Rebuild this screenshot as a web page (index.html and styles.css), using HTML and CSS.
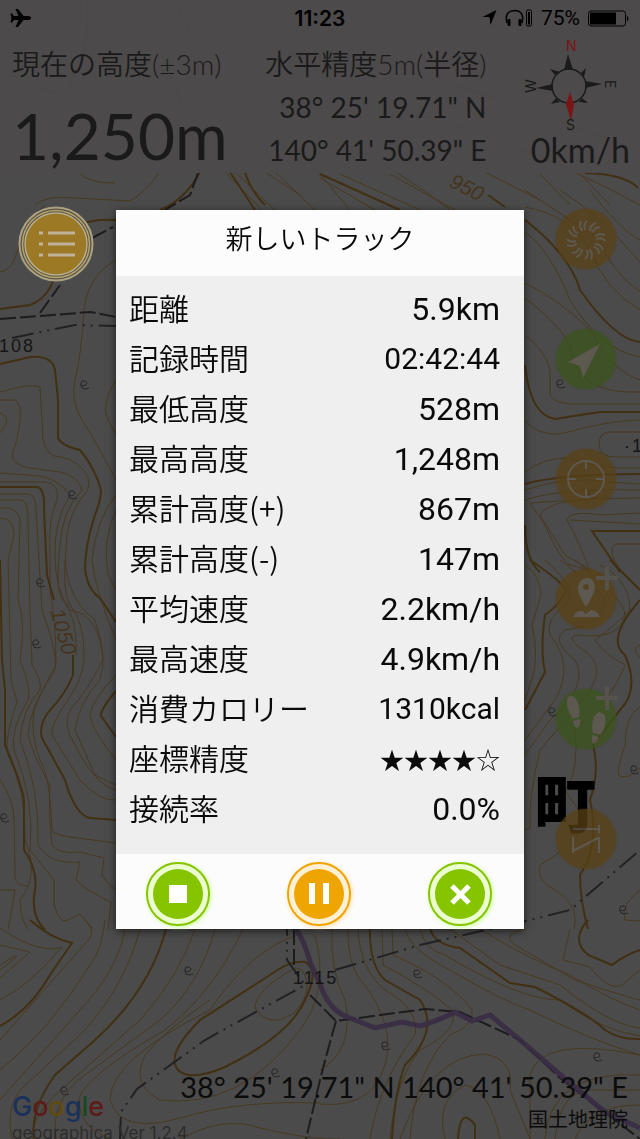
FILE: index.html
```html
<!DOCTYPE html>
<html lang="ja">
<head>
  <meta charset="UTF-8">
  <meta name="viewport" content="width=device-width, initial-scale=1.0">
  <title>新しいトラック</title>
  <link rel="stylesheet" href="styles.css">
</head>
<body>
<div class="screen">
  <svg class="map" viewBox="0 0 640 1139" preserveAspectRatio="xMidYMid slice" aria-hidden="true">
    <defs>
      <path id="orchard" d="M-3 0 Q2 2 3 -2 Q2 -5 -2 -4 Q-5 -1 -2 3 Q1 5 5 3"/>
    </defs>

    <!-- contour lines -->
    <g class="contour">
      <path d="M88 0 Q90 50 72 80 Q68 98 50 92 L0 70"/>
      <path d="M130 0 Q160 40 178 95 Q188 130 202 160"/>
      <path d="M175 0 Q210 90 300 150 L350 210"/>
      <path d="M195 0 Q240 80 320 130 Q400 170 450 210"/>
      <path d="M240 0 Q290 70 400 110 Q520 140 640 205"/>
      <path d="M300 0 Q350 60 470 90 L640 150"/>
      <path d="M78 172 Q90 184 115 183"/>
      <path d="M35 205 Q45 195 75 198 L130 201 Q148 190 158 174"/>
      <path d="M225 172 L262 210 M235 172 L275 210 M265 172 L300 195 M275 172 L315 210 M320 178 L375 210 M340 174 L420 210 M390 174 L455 210 M485 172 L540 200 M540 174 L570 205 M580 174 L610 205"/>
      <path d="M0 272 Q12 270 16 255 Q22 235 35 215 L45 205"/>
      <path d="M116 260 Q88 275 84 310 Q82 350 75 380 Q70 400 82 420 Q95 440 116 480"/>
      <path d="M116 380 Q100 405 108 420 L116 434"/>
      <path d="M0 392 Q30 383 40 387 L43 440 Q47 457 60 457 Q80 460 88 478 Q92 488 80 500 Q66 520 66 550 Q62 590 70 605 Q85 622 84 660 Q82 680 68 700 Q50 725 52 735 L80 780 Q100 802 116 800"/>
      <path d="M0 400 L15 400 Q22 405 20 420 Q18 440 12 455 Q12 465 30 468 L60 472 Q78 476 82 490 Q62 510 60 545 Q55 590 63 600 Q78 618 76 655"/>
      <path d="M0 412 Q9 418 6 424 L0 433"/>
      <path d="M0 473 L40 476 Q60 480 70 495 Q54 520 55 555 Q55 590 70 610 Q100 615 103 660 Q88 690 70 710 Q62 725 75 745 Q95 785 116 790"/>
      <path d="M0 482 L45 482 Q60 484 57 500 Q48 520 50 550 V590 Q56 620 56 665 Q42 690 34 710 Q30 735 40 760 Q50 775 52 830 Q55 835 70 837 L116 843"/>
      <path d="M0 494 H28 Q36 494 36 510 L39 560 L42 610 Q60 660 54 672 Q30 705 28 735 Q34 758 50 785 Q48 810 52 845 Q60 855 80 852 L104 858 L102 875 Q110 888 116 889"/>
      <path d="M0 500 H22 Q28 502 28 520 L30 610 L32 665 Q42 680 40 690 Q22 710 20 740 Q40 790 38 845 Q50 865 80 862 L76 880 Q88 892 111 902 L108 930"/>
      <path d="M0 508 Q18 506 20 520 L18 600 Q26 620 20 660 Q32 690 28 700 Q10 730 14 750 Q35 800 30 850 Q46 870 54 880 L54 905 Q60 925 68 920 L80 914 L93 929"/>
      <path d="M0 518 Q14 518 14 535 L8 560 L11 680 L17 702 Q4 740 8 755 Q26 790 25 840 Q40 875 20 900 Q20 918 28 929"/>
      <path d="M0 780 Q14 800 14 820 L15 870 Q12 885 27 886 M0 890 L15 890 L8 930"/>
      <path d="M116 495 Q96 520 92 560 Q95 590 116 640"/>
      <path d="M116 510 Q102 540 108 575 L116 590"/>
      <path d="M65 560 Q68 600 95 620 Q108 655 100 680 Q80 700 75 730 L95 775 L116 785"/>
      <path d="M116 675 Q92 700 90 715 Q92 730 116 760"/>
      <path d="M0 965 Q24 950 13 960 L0 970 M0 945 L30 952 L0 978 M0 928 Q40 955 62 947 Q30 985 0 1000"/>
      <path d="M85 920 Q95 930 90 938 L0 1040 M105 920 Q102 950 90 965 Q50 1030 0 1070"/>
      <path d="M125 929 Q118 970 80 1010 L0 1100"/>
      <path d="M140 929 Q125 985 85 1030 L20 1090 Q5 1110 12 1139"/>
      <path d="M195 929 Q180 975 140 1020 L55 1095 Q30 1120 32 1139"/>
      <path d="M215 929 Q200 985 160 1020 L85 1075 Q50 1100 56 1139"/>
      <path d="M243 929 Q215 990 165 1030 Q95 1070 80 1095 Q75 1125 110 1139"/>
      <path d="M300 934 Q250 950 210 1010 Q110 1060 110 1100 Q120 1135 180 1118 Q240 1100 320 1103"/>
      <path d="M315 935 Q330 990 300 1030 Q240 1110 160 1100 Q130 1085 145 1055 Q165 1030 210 1000"/>
      <path d="M295 968 Q255 990 255 1008 Q270 1030 295 1012 Q315 990 302 970 Z"/>
      <path d="M180 1139 Q225 1115 260 1128 Q310 1140 340 1139"/>
      <path d="M332 929 Q330 970 345 1000 Q355 1050 320 1070"/>
      <path d="M348 929 Q348 970 365 985 Q390 1020 388 1050 Q380 1110 320 1104"/>
      <path d="M358 929 Q360 970 385 990 Q420 1010 415 1035 Q380 1080 370 1139"/>
      <path d="M382 929 L383 965 Q430 990 452 1010 Q460 1030 420 1050 Q395 1080 390 1139"/>
      <path d="M392 929 L393 955 Q450 980 472 1010 Q475 1025 450 1035 Q415 1070 410 1139"/>
      <path d="M405 929 Q410 950 450 970 Q500 1000 530 1010 Q590 1040 640 1055"/>
      <path d="M420 929 Q425 950 445 955 Q520 1000 560 1000 Q600 1030 640 1036"/>
      <path d="M450 929 L500 965 L560 985 Q610 1025 640 1028"/>
      <path d="M480 929 Q530 960 570 975 Q610 1000 640 1010"/>
      <path d="M525 929 Q500 935 515 945 L575 980 Q620 995 640 1000"/>
      <path d="M570 929 L563 960 L590 967 Q610 992 622 985 L640 970"/>
      <path d="M400 1139 Q430 1055 485 1054 Q515 1060 510 1090 L530 1139"/>
      <path d="M445 1139 Q435 1100 465 1085 Q490 1090 500 1139"/>
      <path d="M530 1139 L530 1075 Q540 1035 640 1055"/>
      <path d="M555 1139 Q560 1085 600 1090 L640 1090 M575 1139 Q590 1105 640 1105 M545 1139 Q550 1070 640 1075"/>
      <path d="M525 207 Q570 215 590 250 Q605 290 640 310"/>
      <path d="M560 190 Q600 215 640 262 M590 190 Q620 230 640 240 M525 190 L600 240 Q610 270 640 292"/>
      <path d="M525 232 Q550 250 570 300 Q600 350 640 357"/>
      <path d="M525 283 Q560 300 590 330 Q610 370 640 380"/>
      <path d="M525 298 Q560 325 570 345 Q575 395 640 392"/>
      <path d="M525 335 Q545 350 550 370 V395 Q555 405 580 404 L640 404"/>
      <path d="M525 420 Q535 435 560 434 Q610 420 640 420"/>
      <path d="M640 432 H610 Q598 433 599 445 Q600 457 615 457 H640"/>
      <path d="M525 472 Q545 457 570 458 Q600 470 640 468"/>
      <path d="M525 490 Q570 475 610 482 L640 484 M525 500 Q560 488 640 490"/>
      <path d="M640 498 L590 499 L530 503 L545 525 Q560 560 570 565 L590 570"/>
      <path d="M600 515 L640 513 M600 515 Q570 510 567 520 L575 535 L590 570"/>
      <path d="M590 500 Q550 500 540 515 L565 555 L600 575"/>
      <path d="M640 544 H615 Q607 550 620 570 M640 524 L570 520"/>
      <path d="M525 565 Q540 575 541 595 L532 625 Q540 660 530 685 L525 700"/>
      <path d="M545 560 Q580 590 565 605 Q545 620 550 635 Q575 665 555 700 L525 740"/>
      <path d="M560 560 Q600 590 605 600 Q605 625 565 630 Q550 640 575 660 Q590 685 550 720 L525 755"/>
      <path d="M575 560 Q625 600 625 615 Q620 640 580 635 Q560 635 590 655 Q610 675 570 715 L540 750 Q528 800 530 828 L525 830"/>
      <path d="M600 565 Q630 580 630 610 Q610 630 595 640 Q605 655 625 665 Q620 680 605 700 L575 730 L576 750 Q575 780 565 790 L585 820 Q570 850 540 865 Q535 880 555 890 Q580 905 574 929"/>
      <path d="M640 645 Q630 650 640 657 M640 707 Q625 715 625 745 Q615 775 620 776 Q628 780 640 768"/>
      <path d="M640 890 Q620 905 625 920 L640 921"/>
    </g>
    <g class="contour contour-index">
      <path d="M200 172 Q185 200 160 210 M230 172 L255 210 M265 205 Q250 190 245 172"/>
      <path d="M320 174 L400 210 M488 195 L505 207 M585 173 Q625 174 638 188"/>
      <path d="M0 309 L30 305 Q48 298 54 278 Q60 235 72 228 Q90 218 116 220"/>
      <path d="M0 364 L30 357 Q52 355 55 370 L58 400 V438 Q62 446 80 450 Q95 468 101 490 Q101 500 95 515 Q85 545 85 570 Q88 590 100 598 L116 622"/>
      <path d="M0 487 H38 Q45 490 44 510 L47 575 L54 600 M73 655 L73 675 Q65 695 50 710 Q38 725 42 738 L65 780 Q75 815 90 818 L116 820"/>
      <path d="M0 560 L2 660 L5 690 V745 Q22 785 24 800 V850 Q38 870 35 890 Q30 915 45 930"/>
      <path d="M116 691 Q100 710 101 716 L116 737"/>
      <path d="M30 920 Q50 938 72 943 L50 975 Q30 1010 0 1026"/>
      <path d="M166 929 Q150 990 95 1040 L55 1075 Q30 1110 34 1139"/>
      <path d="M305 962 Q290 960 270 975 L200 1020 Q165 1055 178 1070 Q190 1082 225 1067 Q290 1035 305 1000 Q320 970 305 962 Z"/>
      <path d="M370 920 Q368 965 385 980 L420 1000 Q440 1030 405 1065 Q395 1090 392 1139"/>
      <path d="M430 929 Q435 945 460 948 L510 983 L535 987 Q590 1015 605 1030 Q620 1040 640 1039"/>
      <path d="M588 920 Q570 940 588 955 L612 965 Q625 955 640 950"/>
      <path d="M458 1139 Q460 1105 475 1125 V1139"/>
      <path d="M525 220 Q570 255 580 290 Q615 340 640 342"/>
      <path d="M525 365 Q530 415 555 419 Q580 415 600 412 H640"/>
      <path d="M525 484 Q560 474 640 474 M640 531 H592 L620 572 M525 525 Q525 560 540 572"/>
      <path d="M530 560 Q560 580 566 590 Q560 605 545 615 Q540 650 545 672 L525 710"/>
      <path d="M610 560 L640 590 M640 600 Q605 640 625 655 Q640 690 620 710 L593 745 Q600 770 590 800 Q600 845 580 875 Q580 900 588 929"/>
    </g>

    <!-- roads and borders -->
    <g class="road">
      <path d="M0 319 L40 316 L90 312 L116 317 M40 313 L60 285 M92 238 L113 227"/>
      <path d="M294 929 V968 M310 995 L336 1021 L425 1009 L460 1012 L520 1040 L560 1078 L640 1139"/>
      <path d="M336 1021 Q325 1060 320 1080 L306 1139"/>
      <path d="M198 173 L190 195 L165 210"/>
    </g>
    <g class="border">
      <path d="M12 338 L50 330 L75 325 L116 326"/>
      <path d="M120 1139 L121 1112 L137 1089 L205 1040 L305 985 L287 960 V929 M335 970 L420 945 L530 920 L570 910 L640 850"/>
    </g>
    <path class="track" d="M296 929 Q304 940 310 962 L320 984 Q328 1008 345 1016 L375 1028 L402 1022 L420 1026 Q440 1020 455 1012 L472 1021 L490 1015 L520 1040 L570 1083 L605 1112 L640 1128"/>

    <g class="orchards">
      <use href="#orchard" x="84" y="385"/><use href="#orchard" x="72" y="495"/>
      <use href="#orchard" x="40" y="583"/><use href="#orchard" x="36" y="644"/>
      <use href="#orchard" x="4" y="818"/><use href="#orchard" x="188" y="971"/>
      <use href="#orchard" x="64" y="1091"/><use href="#orchard" x="275" y="1073"/>
      <use href="#orchard" x="417" y="974"/><use href="#orchard" x="385" y="1046"/>
      <use href="#orchard" x="597" y="1057"/><use href="#orchard" x="560" y="384"/>
      <use href="#orchard" x="552" y="712"/><use href="#orchard" x="634" y="770"/>
      <use href="#orchard" x="623" y="910"/><use href="#orchard" x="592" y="494"/>
    </g>
    <text class="map-spot" x="-1" y="352">108</text>
    <text class="map-spot" x="293" y="984">1115</text>
    <text class="map-spot" x="624" y="452">·1</text>
    <text class="map-height" transform="translate(50 611) rotate(74)">1050</text>
    <text class="map-height" transform="translate(448 186) rotate(27)">950</text>
    <text class="map-town" x="534" y="828">町</text>
  </svg>

  <header class="header">
    <div class="status">
      <svg class="status-plane" viewBox="0 0 22 20" role="img" aria-label="機内モード"><path d="M21 9.200Q20 8 18 8H13.500L8 1H5.500L8.500 8H4L2 5.500H.5L1.500 10L.5 14.500H2L4 12H8.500L5.500 19H8L13.500 12H18Q20 12 21 10.800Z"/></svg>
      <time>11:23</time>
      <div class="status-right">
        <svg width="15" height="16" viewBox="0 0 14 16" aria-hidden="true"><path d="M14 0L0 7H7L8 15Z"/></svg>
        <svg width="28" height="18" viewBox="0 0 28 18" aria-hidden="true"><path d="M2 14Q-1 2 9.500 1.500Q20 2 17 14" fill="none" stroke="#000" stroke-width="1.500"/><rect x="2.500" y="10" width="3" height="7" rx="1"/><rect x="13.500" y="10" width="3" height="7" rx="1"/><rect x="21.500" y="1" width="5" height="16" rx="1.500" fill="none" stroke="#000"/><path d="M23 3H25V15.500H23Z"/></svg>
        <span>75%</span>
        <svg width="42" height="17" viewBox="0 0 42 16" aria-hidden="true"><rect x=".5" y=".5" width="37" height="15" rx="2.500" fill="none" stroke="#000"/><path d="M2 2H28V14H2Z"/><path d="M39 5Q42 8 39 11Z"/></svg>
      </div>
    </div>
    <div class="readings">
      <div class="altitude">
        <div class="reading-label">現在の高度(±3m)</div>
        <div class="altitude-value">1,250m</div>
      </div>
      <div class="position">
        <div class="reading-label">水平精度5m(半径)</div>
        <div class="coordinate">38° 25' 19.71" N</div>
        <div class="coordinate">140° 41' 50.39" E</div>
      </div>
      <div class="heading">
        <svg class="compass" viewBox="0 0 90 90" role="img" aria-label="コンパス">
          <circle cx="45" cy="44" r="17" fill="none" stroke="#1b1b1b" stroke-width="1.500"/>
          <path d="M44 12L49 28L40 28ZM78 42L61 46V39ZM12 46L29 42V49ZM31 33L26 27L36 30ZM57 31L62 26L60 35ZM32 56L27 62L36 60ZM58 56L64 61L55 60Z" fill="#1b1b1b"/>
          <path d="M46 50L50 63L47 79L42 62Z" fill="#7b1515"/>
          <text class="north" x="42" y="9">N</text>
          <text x="42" y="88">S</text>
          <text transform="translate(81 38) rotate(90)">E</text>
          <text transform="translate(12 51) rotate(-90)">W</text>
        </svg>
        <div class="speed">0km/h</div>
      </div>
    </div>
  </header>

  <main class="controls">
    <button class="menu-button" type="button" aria-label="メニュー">
      <svg viewBox="0 0 76 76" aria-hidden="true">
        <circle cx="38" cy="38" r="36.500" fill="#5b5343" stroke="#aaa083" stroke-width="2"/>
        <circle cx="38" cy="38" r="33.500" fill="none" stroke="#b5a66e" stroke-width="1.500"/>
        <circle cx="38" cy="38" r="31" fill="#9c7925" stroke="#b9ad8f" stroke-width="1.500"/>
        <path d="M30 27H57M30 38H57M30 49H57M21 27H25M21 38H25M21 49H25" stroke="#c0b19b" stroke-width="3"/>
      </svg>
    </button>
    <div class="tools">
      <button class="tool" type="button" aria-label="回転">
        <svg viewBox="0 0 60 60" aria-hidden="true">
          <defs><path id="blade" d="M29 21Q27 15 31 12M34 22Q34 16 40 14"/></defs>
          <use href="#blade"/><use href="#blade" transform="rotate(45 30 31)"/><use href="#blade" transform="rotate(90 30 31)"/><use href="#blade" transform="rotate(135 30 31)"/><use href="#blade" transform="rotate(180 30 31)"/><use href="#blade" transform="rotate(225 30 31)"/><use href="#blade" transform="rotate(270 30 31)"/><use href="#blade" transform="rotate(315 30 31)"/>
        </svg>
      </button>
      <button class="tool tool-green" type="button" aria-label="現在地">
        <svg viewBox="0 0 60 60" aria-hidden="true"><path class="solid" d="M44 15L12 33L24 37L27 49Z"/></svg>
      </button>
      <button class="tool" type="button" aria-label="中心">
        <svg viewBox="0 0 60 60" aria-hidden="true"><circle cx="30" cy="30" r="18"/><path d="M30 12V20M30 40V48M12 30H20M40 30H48"/></svg>
      </button>
      <button class="tool" type="button" aria-label="地点を追加">
        <svg viewBox="0 0 60 60" aria-hidden="true"><path class="solid" fill-rule="evenodd" d="M30 38Q21 24 22 18Q24 9 31 9Q38 9 39 18Q39 24 30 38ZM30 15A3 3 0 1 0 30 21A3 3 0 1 0 30 15ZM17 48Q20 41 26 42L30 45L35 41Q42 42 44 48Z"/><path class="plus" d="M51-2V21M40 9H62"/></svg>
      </button>
      <button class="tool tool-green" type="button" aria-label="トラックを追加">
        <svg viewBox="0 0 60 60" aria-hidden="true"><path class="solid" d="M11 11Q14 3 20 10Q25 18 23 28L17 30Q10 20 11 11ZM17 32L24 30Q25 38 21 39Q18 38 17 32ZM38 28Q44 19 49 27Q51 36 45 46L37 44Q35 35 38 28ZM36 46L43 48Q41 54 38 55Q35 53 36 46Z"/><path class="plus" d="M51-2V21M40 9H62"/></svg>
      </button>
      <button class="tool" type="button" aria-label="地図を切替">
        <svg viewBox="0 0 60 60" aria-hidden="true"><path d="M17 28V44M17 42L42 29M43 28V44M17 20H43M43 16V24"/></svg>
      </button>
    </div>
  </main>

  <footer class="footer">
    <div class="brand">
      <div class="google"><span class="blue">G</span><span class="red">o</span><span class="yellow">o</span><span class="blue">g</span><span class="green">l</span><span class="red">e</span></div>
      <div class="version">geographica Ver 1.2.4</div>
    </div>
    <div class="map-info">
      <div class="map-coordinate">38° 25' 19.71" N 140° 41' 50.39" E</div>
      <div class="source">国土地理院</div>
    </div>
  </footer>
</div>

<div class="overlay">
  <section class="dialog" role="dialog" aria-labelledby="dialog-title">
    <h1 class="dialog-title" id="dialog-title">新しいトラック</h1>
    <dl class="stats">
      <div class="stat"><dt>距離</dt><dd>5.9km</dd></div>
      <div class="stat"><dt>記録時間</dt><dd class="compact">02:42:44</dd></div>
      <div class="stat"><dt>最低高度</dt><dd>528m</dd></div>
      <div class="stat"><dt>最高高度</dt><dd>1,248m</dd></div>
      <div class="stat"><dt>累計高度(+)</dt><dd>867m</dd></div>
      <div class="stat"><dt>累計高度(-)</dt><dd>147m</dd></div>
      <div class="stat"><dt>平均速度</dt><dd>2.2km/h</dd></div>
      <div class="stat"><dt>最高速度</dt><dd>4.9km/h</dd></div>
      <div class="stat"><dt>消費カロリー</dt><dd class="compact">1310kcal</dd></div>
      <div class="stat"><dt>座標精度</dt><dd class="stars">★★★★☆</dd></div>
      <div class="stat"><dt>接続率</dt><dd>0.0%</dd></div>
    </dl>
    <div class="dialog-actions">
      <button class="action" type="button" aria-label="停止">
        <svg viewBox="0 0 50 50" aria-hidden="true"><path d="M16 16H34V34H16Z"/></svg>
      </button>
      <button class="action action-pause" type="button" aria-label="一時停止">
        <svg viewBox="0 0 50 50" aria-hidden="true"><path d="M15 14H21V35H15ZM29 14H35V35H29Z"/></svg>
      </button>
      <button class="action" type="button" aria-label="閉じる">
        <svg viewBox="0 0 50 50" aria-hidden="true"><path d="M17 17L34 34M34 17L17 34" stroke="#fff" stroke-width="5"/></svg>
      </button>
    </div>
  </section>
</div>
</body>
</html>
```
FILE: styles.css
```css
:root {
  --backdrop: #4b4b4b;
  --ink: #1b1a1a;
  --green: #86c400;
  --orange: #eea500;
  --light: #fcfcfc;
  --panel: #efefef;
  --cjk: "Noto Sans CJK JP", sans-serif;
}

* {
  margin: 0;
  padding: 0;
  box-sizing: border-box;
}

body {
  font-family: Lato, var(--cjk);
  background: var(--backdrop);
  color: var(--ink);
}

button {
  border: none;
  background: none;
  cursor: pointer;
}

svg {
  display: block;
}

.screen {
  position: relative;
  display: flex;
  flex-direction: column;
  height: 100vh;
  overflow: hidden;
}

/* Map */
.map {
  position: absolute;
  inset: 0;
  width: 100%;
  height: 100%;
}

.map path {
  fill: none;
}

.contour {
  stroke: #48391f;
  stroke-width: 1;
}

.contour-index {
  stroke: #423013;
  stroke-width: 2;
}

.road {
  stroke: #1d1d20;
  stroke-width: 2;
  stroke-dasharray: 16 4;
}

.border {
  stroke: #222225;
  stroke-width: 2;
  stroke-dasharray: 22 6 2 6 2 6;
}

.map .track {
  stroke: #382c44;
  stroke-width: 5;
  opacity: 0.9;
}

.orchards {
  stroke: #27272a;
}

.map-spot {
  font: 18px "Liberation Sans", sans-serif;
  letter-spacing: 2px;
  fill: #151515;
}

.map-height {
  font: italic 21px "Liberation Sans", sans-serif;
  fill: #44351c;
}

.map-town {
  font: 900 62px "Noto Sans CJK JP", sans-serif;
  fill: #000000;
}

/* Header */
.header {
  position: relative;
  height: 173px;
  background: rgba(76, 74, 75, 0.85);
}

.status {
  display: grid;
  grid-template-columns: 1fr auto 1fr;
  align-items: center;
  height: 36px;
  padding: 0 10px;
  font-family: Inter, sans-serif;
  font-size: 20px;
  color: #000000;
}

.status time {
  font-size: 21px;
  font-weight: 600;
}

.status-plane {
  width: 22px;
  height: 20px;
}

.status-right {
  display: flex;
  align-items: center;
  justify-content: flex-end;
  gap: 8px;
}

.status-right span {
  font-family: Roboto, sans-serif;
  font-size: 21px;
}

.readings {
  display: flex;
  justify-content: space-between;
  padding: 6px 10px 0 12px;
}

.reading-label {
  font-size: 28px;
  font-weight: 350;
  line-height: 44px;
  white-space: nowrap;
}

.altitude-value {
  font-size: 64px;
  line-height: 100px;
}

.position {
  text-align: right;
}

.coordinate {
  font-size: 28px;
  line-height: 43px;
  white-space: nowrap;
}

.heading {
  display: flex;
  flex-direction: column;
  align-items: flex-end;
}

.compass {
  width: 90px;
  height: 90px;
  margin-right: 16px;
  overflow: visible;
}

.compass text {
  font: 14px/14px Inter, sans-serif;
  fill: #1b1a1a;
}

.compass .north {
  fill: #7b1515;
}

.speed {
  font-size: 34px;
  line-height: 36px;
}

/* Map controls */
.controls {
  position: relative;
  flex: 1;
  display: flex;
  justify-content: space-between;
  align-items: flex-start;
  padding: 33px 24px 0 18px;
}

.menu-button {
  width: 76px;
  height: 76px;
}

.tools {
  display: flex;
  flex-direction: column;
  gap: 60px;
  padding-top: 3px;
}

.tool {
  width: 60px;
  height: 60px;
  border-radius: 50%;
  background: #594115;
  box-shadow: 0 0 2px #594115;
  opacity: 0.75;
}

.tool-green {
  background: #3c531c;
  box-shadow: 0 0 2px #3c531c;
}

.tool svg {
  overflow: visible;
  fill: none;
  stroke: #655e52;
  stroke-width: 2;
}

.tool .solid {
  fill: #655e52;
  stroke: none;
}

.tool .plus {
  stroke: #5a564e;
  stroke-width: 4;
}

/* Footer */
.footer {
  position: relative;
  display: flex;
  justify-content: space-between;
  align-items: flex-end;
  padding: 0 12px 6px;
  color: #0c0c0c;
}

.brand {
  flex: 1;
  width: 0;
  margin-bottom: -9px;
}

.google {
  font: 500 27px/34px Inter, sans-serif;
}

.blue {
  color: #19315b;
}

.red {
  color: #5d1b18;
}

.yellow {
  color: #624b0a;
}

.green {
  color: #164922;
}

.version {
  font: 17px/18px Inter, sans-serif;
  color: #2d2d2d;
  white-space: nowrap;
}

.map-info {
  text-align: right;
}

.map-coordinate {
  font-size: 29px;
  line-height: 36px;
  white-space: nowrap;
}

.source {
  font-size: 20px;
  line-height: 28px;
}

/* Dialog */
.overlay {
  position: fixed;
  inset: 0;
  display: grid;
  place-items: center;
  pointer-events: none;
}

.dialog {
  width: 90%;
  max-width: 408px;
  background: var(--light);
  color: #0a0a0a;
  box-shadow: 0 2px 8px rgba(0, 0, 0, 0.6);
  pointer-events: auto;
}

.dialog-title {
  padding: 8px 0 18px;
  font-family: var(--cjk);
  font-size: 27px;
  font-weight: 350;
  line-height: 40px;
  text-align: center;
}

.stats {
  padding: 8px 24px 20px 13px;
  background: var(--panel);
}

.stat {
  display: flex;
  justify-content: space-between;
  align-items: flex-start;
  height: 50px;
}

.stat dt {
  font-family: var(--cjk);
  font-size: 30px;
  font-weight: 350;
  line-height: 46px;
}

.stat dd {
  font-family: Roboto, sans-serif;
  font-size: 32px;
  line-height: 50px;
}

.stat .compact {
  font-size: 30px;
}

.stat .stars {
  font-family: var(--cjk);
  font-size: 24px;
}

.dialog-actions {
  display: flex;
  justify-content: space-between;
  padding: 8px 32px 3px 30px;
}

.action {
  width: 64px;
  height: 64px;
  border: 2px solid var(--green);
  border-radius: 50%;
  padding: 5px;
  background: #ecffd0;
  box-shadow: 1px 1px 4px #c8ff90;
}

.action svg {
  width: 50px;
  height: 50px;
  border-radius: 50%;
  background: var(--green);
  fill: #ffffff;
}

.action-pause {
  border-color: var(--orange);
  background: #fff0d6;
  box-shadow: 1px 1px 4px #ffdca0;
}

.action-pause svg {
  background: var(--orange);
}
```
